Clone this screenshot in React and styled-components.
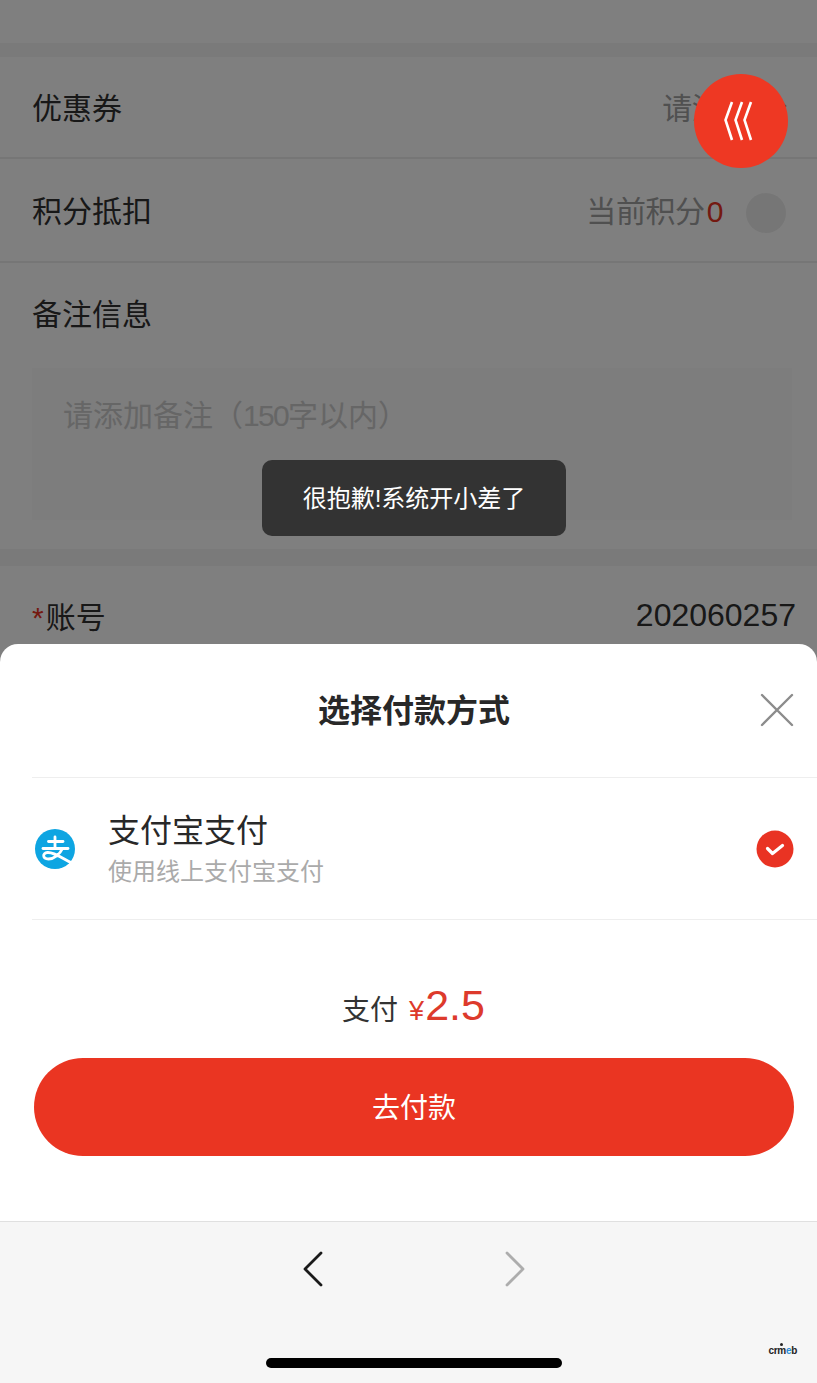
import React from "react";
import styled, { createGlobalStyle } from "styled-components";

const GlobalStyle = createGlobalStyle`
  html, body {
    margin: 0;
    padding: 0;
    background: #f6f6f6;
    font-family: "Liberation Sans", "Noto Sans CJK SC", sans-serif;
  }
  * { box-sizing: border-box; }
`;

const App = () => {
  return (
    <Screen>
      <GlobalStyle />
      <Viewport>
        <Form>
          <TopBlank />
          <Band />
          <Row $height={102}>
            <Label>优惠券</Label>
            <CouponPicker>
              <Hint>请添加</Hint>
              <svg width="16" height="24" viewBox="0 0 16 24" fill="none" stroke="#999" strokeWidth="2.4">
                <path d="M3 2 L13 12 L3 22" />
              </svg>
            </CouponPicker>
          </Row>
          <Row $height={104}>
            <Label>积分抵扣</Label>
            <PointsInfo>
              <Hint>
                当前积分<PointsValue>0</PointsValue>
              </Hint>
              <SwitchKnob />
            </PointsInfo>
          </Row>
          <RemarkSection>
            <RemarkTitle>备注信息</RemarkTitle>
            <RemarkBox>
              请添加备注（<Digits>150</Digits>字以内）
            </RemarkBox>
          </RemarkSection>
          <Band $height={17} />
          <AccountRow>
            <Label>
              <Required>*</Required>账号
            </Label>
            <AccountValue>202060257</AccountValue>
          </AccountRow>
        </Form>

        <Mask />

        <FloatButton>
          <svg width="30" height="40" viewBox="0 0 30 40" fill="none" stroke="#fff" strokeWidth="2.6">
            <path d="M9 1 L2.5 19 L9 39" />
            <path d="M19 1 L12.5 19 L19 39" />
            <path d="M28 1 L21.5 19 L28 39" />
          </svg>
        </FloatButton>

        <Toast>很抱歉!系统开小差了</Toast>

        <Sheet>
          <SheetHeader>
            <SheetTitle>选择付款方式</SheetTitle>
            <CloseIcon width="34" height="34" viewBox="0 0 34 34" stroke="#8c8c8c" strokeWidth="2.4" strokeLinecap="round">
              <path d="M2 2 L32 32 M32 2 L2 32" />
            </CloseIcon>
          </SheetHeader>
          <PayOption>
            <svg width="42" height="42" viewBox="0 0 42 42">
              <circle cx="21" cy="21" r="20" fill="#0ea5e2" />
              <g fill="none" stroke="#fff" strokeWidth="2.8" strokeLinecap="round">
                <path d="M14.5 13.5 H29" />
                <path d="M21 9 V20" />
                <path d="M9 20.5 H34" />
                <path d="M28.5 20.5 C26 26 20 31 14.5 31 C8.5 31 8 25 13.5 24.5 C21 24 29 31 38 35" />
              </g>
            </svg>
            <PayText>
              <PayName>支付宝支付</PayName>
              <PayDesc>使用线上支付宝支付</PayDesc>
            </PayText>
            <svg width="38" height="38" viewBox="0 0 38 38">
              <circle cx="19" cy="19" r="18.5" fill="#e93323" />
              <path d="M11.5 18.5 L16.5 23.5 L26.5 15.5" fill="none" stroke="#fff" strokeWidth="3.2" strokeLinecap="round" strokeLinejoin="round" />
            </svg>
          </PayOption>
          <Total>
            <TotalLabel>支付</TotalLabel>
            <TotalAmount>
              <Currency>¥</Currency>2.5
            </TotalAmount>
          </Total>
          <PayButton>去付款</PayButton>
        </Sheet>
      </Viewport>

      <BrowserBar>
        <NavButtons>
          <svg width="20" height="36" viewBox="0 0 20 36" fill="none" stroke="#1a1a1a" strokeWidth="2.8" strokeLinecap="round" strokeLinejoin="round">
            <path d="M18 2 L2 18 L18 34" />
          </svg>
          <svg width="20" height="36" viewBox="0 0 20 36" fill="none" stroke="#adadad" strokeWidth="2.8" strokeLinecap="round" strokeLinejoin="round">
            <path d="M2 2 L18 18 L2 34" />
          </svg>
        </NavButtons>
        <HomeBar />
        <Watermark>
          cr<WatermarkMan>m</WatermarkMan>
          <WatermarkDot>e</WatermarkDot>b
        </Watermark>
      </BrowserBar>
    </Screen>
  );
};

export default App;

const Screen = styled.div`
  width: 817px;
  height: 1383px;
  display: flex;
  flex-direction: column;
  overflow: hidden;
`;

const Viewport = styled.div`
  position: relative;
  height: 1221px;
  overflow: hidden;
  background: #fff;
`;

const Form = styled.div`
  display: flex;
  flex-direction: column;
`;

const TopBlank = styled.div`
  height: 43px;
`;

const Band = styled.div`
  height: ${(props) => props.$height || 14}px;
  background: #f5f5f5;
`;

const Row = styled.div`
  height: ${(props) => props.$height}px;
  padding: 0 31px 2px 32px;
  display: flex;
  align-items: center;
  justify-content: space-between;
  border-bottom: 2px solid #ececec;
`;

const Label = styled.div`
  font-size: 30px;
  color: #303030;
`;

const CouponPicker = styled.div`
  display: flex;
  align-items: center;
  gap: 21px;
  margin-right: -2px;
`;

const Hint = styled.div`
  font-size: 30px;
  letter-spacing: -0.4px;
  color: #a0a0a0;
`;

const PointsInfo = styled.div`
  display: flex;
  align-items: center;
  gap: 23px;
`;

const PointsValue = styled.span`
  margin-left: 2px;
  color: #e93323;
`;

const SwitchKnob = styled.div`
  width: 40px;
  height: 40px;
  margin-top: 8px;
  border-radius: 50%;
  background: #ededed;
`;

const RemarkSection = styled.div`
  height: 286px;
  padding: 33px 25px 0 32px;
  display: flex;
  flex-direction: column;
`;

const RemarkTitle = styled.div`
  font-size: 30px;
  line-height: 38px;
  color: #303030;
`;

const RemarkBox = styled.div`
  margin-top: 34px;
  height: 152px;
  padding: 29px 31px;
  background: #fafafa;
  font-size: 30px;
  line-height: 38px;
  color: #ccc;
`;

const Digits = styled.span`
  letter-spacing: -1.7px;
`;

const AccountRow = styled.div`
  padding: 27px 21px 0 32px;
  display: flex;
  align-items: center;
  justify-content: space-between;
`;

const Required = styled.span`
  color: #e93323;
  margin-right: 2px;
`;

const AccountValue = styled.div`
  font-size: 32px;
  color: #303030;
`;

const Mask = styled.div`
  position: absolute;
  inset: 0;
  background: rgba(0, 0, 0, 0.5);
`;

const FloatButton = styled.div`
  position: absolute;
  left: 694px;
  top: 74px;
  width: 94px;
  height: 94px;
  padding-right: 6px;
  border-radius: 50%;
  background: #ee3823;
  display: flex;
  align-items: center;
  justify-content: center;
`;

const Toast = styled.div`
  position: absolute;
  left: 262px;
  top: 460px;
  width: 304px;
  height: 76px;
  padding-bottom: 3px;
  border-radius: 10px;
  background: #333;
  color: #fff;
  font-size: 24px;
  display: flex;
  align-items: center;
  justify-content: center;
`;

const Sheet = styled.div`
  position: absolute;
  left: 0;
  right: 0;
  bottom: 0;
  height: 577px;
  background: #fff;
  border-radius: 18px 18px 0 0;
  display: flex;
  flex-direction: column;
`;

const SheetHeader = styled.div`
  position: relative;
  height: 134px;
  margin-left: 32px;
  padding: 0 21px 6px 0;
  border-bottom: 1px solid #eee;
  display: flex;
  align-items: center;
  justify-content: center;
`;

const SheetTitle = styled.div`
  font-size: 32px;
  font-weight: 700;
  color: #282828;
`;

const CloseIcon = styled.svg`
  position: absolute;
  right: 23px;
  top: 49px;
`;

const PayOption = styled.div`
  height: 142px;
  margin-left: 32px;
  padding: 0 23px 0 2px;
  border-bottom: 1px solid #eee;
  display: flex;
  align-items: center;
  gap: 32px;
`;

const PayText = styled.div`
  flex: 1;
  padding-top: 2px;
  display: flex;
  flex-direction: column;
`;

const PayName = styled.div`
  font-size: 32px;
  line-height: 44px;
  color: #282828;
`;

const PayDesc = styled.div`
  font-size: 24px;
  line-height: 37px;
  color: #aaa;
`;

const Total = styled.div`
  margin-top: 61px;
  height: 55px;
  padding-left: 10px;
  display: flex;
  align-items: baseline;
  justify-content: center;
  gap: 11px;
`;

const TotalLabel = styled.span`
  font-size: 28px;
  color: #333;
`;

const TotalAmount = styled.span`
  font-size: 43px;
  color: #dd3a2c;
`;

const Currency = styled.span`
  font-size: 27px;
  margin-right: 1px;
`;

const PayButton = styled.div`
  margin: 22px 23px 0 34px;
  height: 98px;
  padding-bottom: 2px;
  border-radius: 49px;
  background: #ea3522;
  color: #fff;
  font-size: 28px;
  display: flex;
  align-items: center;
  justify-content: center;
`;

const BrowserBar = styled.div`
  position: relative;
  flex: 1;
  padding-left: 11px;
  background: #f6f6f6;
  border-top: 1px solid #e0e0e0;
  display: flex;
  flex-direction: column;
  align-items: center;
`;

const NavButtons = styled.div`
  margin-top: 29px;
  display: flex;
  gap: 182px;
`;

const HomeBar = styled.div`
  margin-top: 71px;
  width: 296px;
  height: 10px;
  border-radius: 5px;
  background: #000;
`;

const Watermark = styled.div`
  position: absolute;
  right: 20px;
  bottom: 27px;
  font-size: 10px;
  font-weight: 700;
  letter-spacing: -0.3px;
  color: #222;
`;

const WatermarkMan = styled.span`
  position: relative;
  &::before {
    content: "";
    position: absolute;
    left: 3px;
    top: -2px;
    width: 3px;
    height: 3px;
    border-radius: 50%;
    background: #222;
  }
`;

const WatermarkDot = styled.span`
  color: #2a8fd8;
`;
